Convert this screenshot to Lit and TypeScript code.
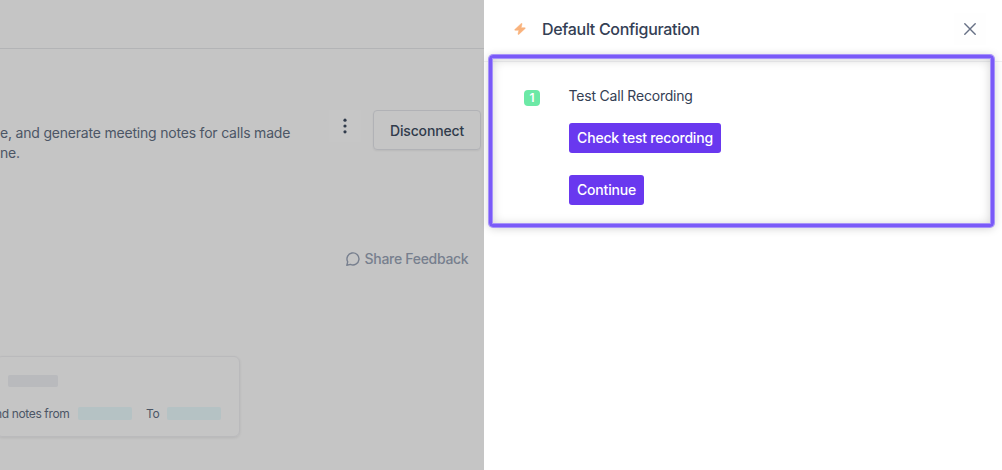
import { LitElement, html, css } from 'lit';
import { customElement, property } from 'lit/decorators.js';

@customElement('integration-page')
class IntegrationPage extends LitElement {
  render() {
    return html`
      <header class="topbar"></header>
      <section class="intro">
        <div class="description">
          <div class="line">e, and generate meeting notes for calls made</div>
          <div class="line">ne.</div>
        </div>
        <button class="kebab" aria-label="More">
          <svg width="4" height="16" viewBox="0 0 4 16" fill="currentColor">
            <circle cx="2" cy="2.2" r="1.6" />
            <circle cx="2" cy="8" r="1.6" />
            <circle cx="2" cy="13.8" r="1.6" />
          </svg>
        </button>
        <button class="disconnect"><span>Disconnect</span></button>
      </section>
      <div class="feedback-row">
        <button class="feedback">
          <svg width="14" height="14" viewBox="0 0 14 14" fill="none" stroke="currentColor" stroke-width="1.4" stroke-linejoin="round">
            <path d="M1.7 9.8A6 6 0 1 1 4.5 12.4L.8 13.3Z" />
          </svg>
          <span>Share Feedback</span>
        </button>
      </div>
      <section class="card">
        <div class="chip title"></div>
        <div class="range">
          <span class="from">nd notes from</span>
          <div class="chip time"></div>
          <span class="to">To</span>
          <div class="chip time"></div>
        </div>
      </section>
    `;
  }

  static styles = css`
    :host {
      display: flex;
      flex-direction: column;
      width: 484px;
      overflow: hidden;
      background: #c5c5c5;
      color: #4c5665;
    }
    button {
      font: inherit;
      padding: 0;
      border: none;
      background: transparent;
      display: flex;
      align-items: center;
      justify-content: center;
    }
    .topbar {
      height: 48px;
      border-bottom: 1px solid #b3b4b6;
    }
    .intro {
      display: flex;
      align-items: flex-start;
      margin-top: 61px;
      height: 54px;
    }
    .description {
      width: 329px;
      padding-top: 13px;
      font-size: 14px;
      line-height: 20px;
      letter-spacing: -0.2px;
      white-space: nowrap;
    }
    .kebab {
      width: 32px;
      height: 32px;
      background: #c6c6c6;
      color: #303b4b;
    }
    .disconnect {
      box-sizing: border-box;
      width: 108px;
      height: 40px;
      margin-left: 12px;
      border: 1px solid #b1b2b6;
      border-radius: 4px;
      box-shadow: 0 1px 2px rgba(0, 0, 0, 0.06);
      color: #303b4b;
      font-size: 14px;
      font-weight: 500;
      letter-spacing: -0.15px;
    }
    .feedback-row {
      display: flex;
      justify-content: flex-end;
      padding-right: 6px;
      margin-top: 79px;
    }
    .feedback {
      width: 142px;
      height: 32px;
      gap: 5px;
      color: #777f8e;
      font-size: 14px;
      font-weight: 500;
      letter-spacing: -0.3px;
    }
    .feedback span {
      margin-bottom: 1px;
    }
    .card {
      box-sizing: border-box;
      width: 244px;
      height: 81px;
      margin: 81px 0 0 -4px;
      padding: 18px 0 0 3px;
      border: 1px solid #bababc;
      border-radius: 6px;
      box-shadow: 0 1px 3px rgba(0, 0, 0, 0.08);
    }
    .chip {
      border-radius: 2px;
    }
    .title {
      width: 50px;
      height: 12px;
      margin-left: 8px;
      background: #b9babd;
    }
    .range {
      display: flex;
      align-items: center;
      height: 20px;
      margin-top: 16px;
      font-size: 12px;
      white-space: nowrap;
    }
    .from {
      width: 79px;
      margin-left: -5px;
      letter-spacing: -0.36px;
    }
    .time {
      width: 54px;
      height: 13px;
      margin-left: 4px;
      background: #b5c2c4;
    }
    .to {
      width: 14px;
      margin: 0 3px 0 14px;
      letter-spacing: -0.3px;
    }
  `;
}

@customElement('setup-step')
class SetupStep extends LitElement {
  @property({ type: Number }) index = 1;
  @property() label = '';

  render() {
    return html`
      <div class="badge">${this.index}</div>
      <div class="content">
        <div class="label">${this.label}</div>
        <button class="primary check">Check test recording</button>
        <button class="primary continue">Continue</button>
      </div>
    `;
  }

  static styles = css`
    :host {
      display: flex;
      align-items: flex-start;
      gap: 29px;
      padding: 24px 40px;
    }
    .badge {
      width: 16px;
      height: 16px;
      margin-top: 4px;
      border-radius: 4px;
      background: #6ce9a6;
      color: #fff;
      font-size: 12px;
      font-weight: 600;
      line-height: 16px;
      text-align: center;
    }
    .content {
      display: flex;
      flex-direction: column;
      align-items: flex-start;
    }
    .label {
      color: #344054;
      font-size: 14px;
      line-height: 20px;
      letter-spacing: -0.2px;
      margin-left: -0.5px;
    }
    .primary {
      height: 30px;
      padding: 0 0 1px;
      border: none;
      border-radius: 3px;
      background: #6938ef;
      color: #fff;
      font-family: inherit;
      font-size: 14px;
      font-weight: 550;
      letter-spacing: -0.2px;
      white-space: nowrap;
    }
    .check {
      width: 152px;
      margin-top: 17px;
    }
    .continue {
      width: 75px;
      margin-top: 22px;
    }
  `;
}

@customElement('config-drawer')
class ConfigDrawer extends LitElement {
  render() {
    return html`
      <header class="header">
        <svg class="bolt" width="12" height="12" viewBox="0 0 12 12" fill="currentColor" stroke="currentColor" stroke-width="0.5" stroke-linejoin="round">
          <path d="M7.3.4.8 6.6Q.4 7.2 1.1 7.3H4.8L4 11.1Q4.1 11.9 4.8 11.4L11.2 5.4Q11.6 4.8 10.9 4.7H7.2L8 .9Q8 0 7.3.4Z" />
        </svg>
        <span class="title">Default Configuration</span>
        <button class="close" aria-label="Close">
          <svg width="12" height="12" viewBox="0 0 12 12" stroke="currentColor" stroke-width="1.4" stroke-linecap="round">
            <path d="M.8.8 11.2 11.2M11.2.8.8 11.2" />
          </svg>
        </button>
      </header>
      <setup-step .index=${1} label="Test Call Recording"></setup-step>
      <div class="highlight"></div>
    `;
  }

  static styles = css`
    :host {
      position: relative;
      flex: 1;
      background: #fff;
    }
    .header {
      display: flex;
      align-items: center;
      box-sizing: border-box;
      height: 62px;
      padding: 0 16px 3px 30px;
      border-bottom: 1px solid #f0f1f3;
    }
    .bolt {
      color: #f9b27c;
    }
    .title {
      flex: 1;
      margin-left: 16px;
      color: #344054;
      font-size: 16px;
      font-weight: 500;
      letter-spacing: -0.31px;
    }
    .close {
      display: flex;
      align-items: center;
      justify-content: center;
      width: 32px;
      height: 32px;
      padding: 0;
      border: none;
      background: #fefefe;
      color: #667085;
    }
    .highlight {
      position: absolute;
      left: 5px;
      top: 55px;
      box-sizing: border-box;
      width: 505px;
      height: 172px;
      border: 3px solid #7a5af8;
      border-radius: 4px;
      box-shadow: 0 0 0 1px #a793fa, inset 0 0 0 1px #a793fa,
        0 1px 10px rgba(0, 0, 0, 0.2), inset 0 1px 11px rgba(0, 0, 0, 0.2);
      pointer-events: none;
    }
  `;
}

@customElement('app-root')
class AppRoot extends LitElement {
  render() {
    return html`
      <integration-page></integration-page>
      <config-drawer></config-drawer>
    `;
  }

  static styles = css`
    :host {
      display: flex;
      width: 1002px;
      height: 470px;
      overflow: hidden;
      font-family: Inter, 'Liberation Sans', sans-serif;
    }
  `;
}
